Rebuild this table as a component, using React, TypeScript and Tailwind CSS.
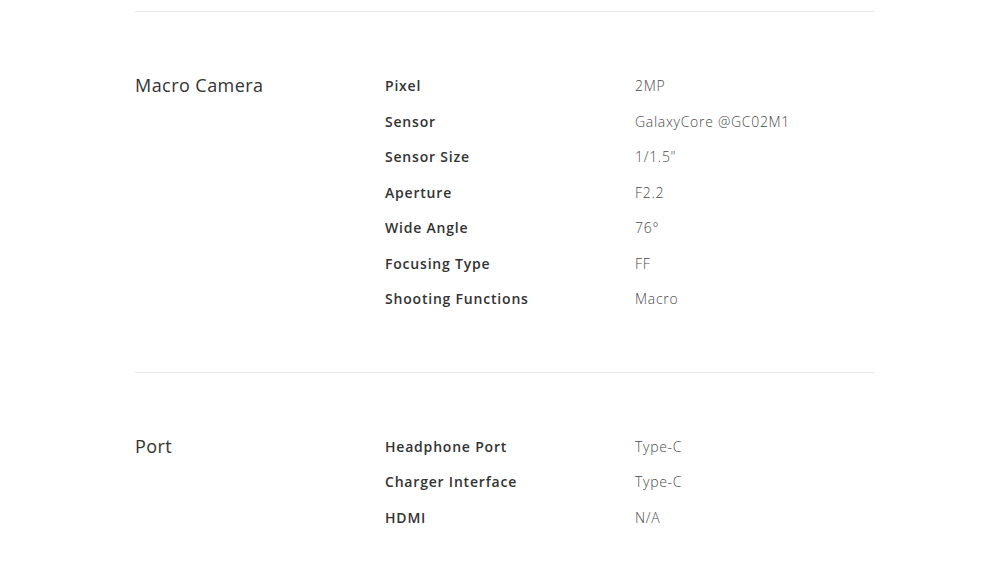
import React from 'react';

type Spec = { label: string; value: string };
type Section = { title: string; specs: Spec[] };

const sections: Section[] = [
  {
    title: 'Macro Camera',
    specs: [
      { label: 'Pixel', value: '2MP' },
      { label: 'Sensor', value: 'GalaxyCore @GC02M1' },
      { label: 'Sensor Size', value: '1/1.5"' },
      { label: 'Aperture', value: 'F2.2' },
      { label: 'Wide Angle', value: '76°' },
      { label: 'Focusing Type', value: 'FF' },
      { label: 'Shooting Functions', value: 'Macro' },
    ],
  },
  {
    title: 'Port',
    specs: [
      { label: 'Headphone Port', value: 'Type-C' },
      { label: 'Charger Interface', value: 'Type-C' },
      { label: 'HDMI', value: 'N/A' },
    ],
  },
];

export default function App() {
  return (
    <div
      className="min-h-[578px] bg-white pt-[11px]"
      style={{ fontFamily: '"Open Sans", "DejaVu Sans", sans-serif' }}
    >
      <div className="ml-[135px] w-[739px]">
        {sections.map(section => (
          <div key={section.title} className="border-t border-[#e8e8e8] pt-[56px] pb-[55px] flex">
            <div className="w-[250px] shrink-0">
              <h3 className="h-[35.5px] flex items-center text-[18px] font-medium tracking-[0.45px] text-[#333]">
                {section.title}
              </h3>
            </div>
            <div className="flex-1">
              {section.specs.map(spec => (
                <div key={spec.label} className="flex h-[35.5px] items-center text-[14px]">
                  <div className="w-[250px] shrink-0 font-semibold tracking-[0.8px] text-[#333]">{spec.label}</div>
                  <div className="font-light tracking-[0.7px] text-[#4a4a4a]">{spec.value}</div>
                </div>
              ))}
            </div>
          </div>
        ))}
      </div>
    </div>
  );
}
